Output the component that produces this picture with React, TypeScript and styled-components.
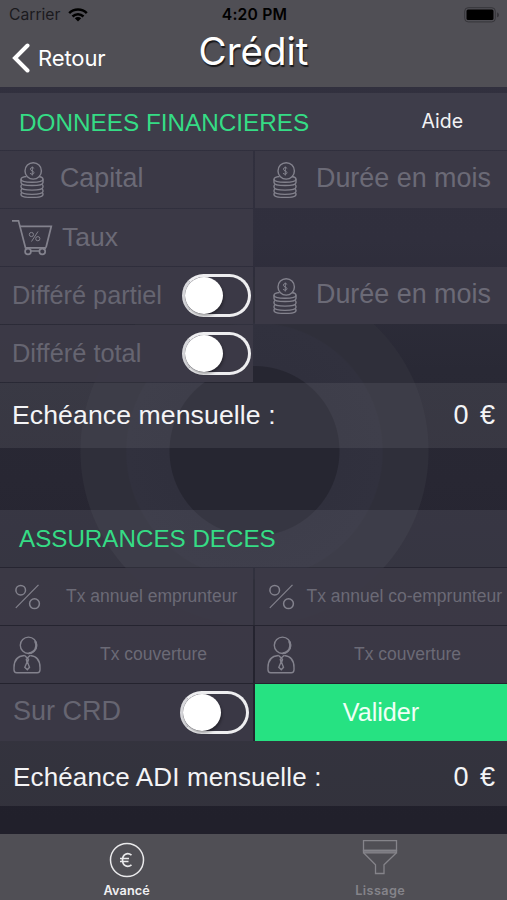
import { ReactNode } from 'react';
import styled, { createGlobalStyle } from 'styled-components';

type TextProps = {
  $size: number;
  $spacing?: number;
  $dx?: number;
};

type ToggleRowProps = {
  label: string;
  size: number;
  edge?: number;
  lift?: number;
};

type FieldProps = {
  icon: ReactNode;
  iconWidth: number;
  inset: number;
  label: string;
  size: number;
  center?: boolean;
  lift?: number;
};

const CoinsIcon = () => (
  <svg width="24" height="36" viewBox="0 0 24 36" fill="none" stroke="#83828d" strokeWidth="1.4">
    <circle cx="13.2" cy="8.9" r="8.2" />
    <path d="M14.2 6.5c-1-1.5-4-1.300-3.800.8.2 1.800 3.600 1.500 3.600 3.400 0 1.900-3 2-4 .5M12.300 4.500v9" strokeWidth="1" />
    <path d="M6.5 14.500C2.500 15 1 16 1 17.200c0 4.100 22 4.100 22 0 0-1.200-1.500-2.200-4-2.700" />
    <path d="M1 17.200v3.200c0 4.200 22 4.200 22 0v-3.200" />
    <path d="M2 22.500c-1.300.8-1 1.500-1 2.500 0 4.200 22 4.200 22 0 0-1 .3-1.700-1-2.500" />
    <path d="M2 27c-1.300.8-1 1.500-1 2.300 0 4.100 22 4.100 22 0 0-.8.3-1.500-1-2.300" />
    <path d="M2 30.500c-1.300.7-1 1.400-1 1.900 0 4 22 4 22 0 0-.5.3-1.200-1-1.900" />
  </svg>
);

const CartIcon = () => (
  <svg width="41" height="37" viewBox="0 0 41 37" fill="none" stroke="#83828d" strokeWidth="1.7">
    <path d="M0 1.800h6.500l7 27h20.500" />
    <path d="M8 7.300h31.300L34 28.500" />
    <path d="M13.500 28.800l1 2M34 28.500l-2.500 2.500M18 32h10" strokeWidth="1.300" />
    <circle cx="16" cy="32.500" r="2.900" />
    <circle cx="30.300" cy="32.500" r="2.900" />
    <path d="M26 12.500l-6.500 10" strokeWidth="1" />
    <circle cx="19.400" cy="15.500" r="2.100" strokeWidth="1" />
    <circle cx="25.800" cy="19.700" r="2.100" strokeWidth="1" />
  </svg>
);

const PercentIcon = () => (
  <svg width="26" height="26" viewBox="0 0 26 26" fill="none" stroke="#83828d" strokeWidth="1.5">
    <circle cx="5.700" cy="6.200" r="4.800" />
    <circle cx="19.500" cy="19.700" r="4.900" />
    <path d="M23.500.8L.8 23.800" strokeWidth="1.200" />
  </svg>
);

const PersonIcon = () => (
  <svg width="28" height="38" viewBox="0 0 28 38" fill="none" stroke="#83828d" strokeWidth="1.4">
    <circle cx="15.500" cy="9.300" r="8.200" />
    <path d="M22 5c2 4 1 8-1.500 10.200-1.500 1.500-3.500 2-5 2" strokeWidth="2" />
    <path d="M11.300 19.500C5 20 1 23.500 1 31.500v2.300c0 1.900 1 2.900 2.700 2.900h20.600c1.700 0 2.700-1 2.700-2.900v-2.300c0-8-4-11.500-9.700-12" />
    <path d="M11.300 19.300l3 2.700 3-2.700M14.300 22l-1 1.500.6 2.500M14.500 22l1 1.500-.8 2.500M14.300 25.500l-2.500 5.800 2.500 2.500 2.200-2.500z" />
  </svg>
);

const ToggleRow = ({ label, size, edge = 2, lift = 0 }: ToggleRowProps) => (
  <ToggleCell $edge={edge}>
    <ToggleLabel $size={size} $lift={lift}>
      {label}
    </ToggleLabel>
    <Switch>
      <Knob />
    </Switch>
  </ToggleCell>
);

const Field = ({ icon, iconWidth, inset, label, size, center, lift = 3 }: FieldProps) => (
  <Cell>
    <IconBox $inset={inset} $width={iconWidth}>
      {icon}
    </IconBox>
    <FieldText $center={center} $size={size} $lift={lift}>
      {label}
    </FieldText>
  </Cell>
);

export default function App() {
  return (
    <Screen>
      <GlobalStyle />
      <Header>
        <StatusBar>
          <Carrier>
            Carrier
            <svg width="20" height="14" viewBox="0 0 20 14" fill="none" stroke="#000" strokeWidth="2.500">
              <path d="M1.200 5.200C6 .3 14 .3 18.800 5.200" />
              <path d="M4.500 8.500c3.200-3.100 7.800-3.100 11 0" />
              <path d="M10 13.500L6.800 10.300c1.900-1.700 4.500-1.700 6.400 0z" fill="#000" stroke="none" />
            </svg>
          </Carrier>
          <Clock>4:20 PM</Clock>
          <BatteryBox>
            <svg width="36" height="16" viewBox="0 0 36 16" fill="none">
              <rect x=".7" y=".7" width="30.600" height="14.200" rx="3.500" stroke="#36353a" />
              <rect x="2.500" y="2.500" width="27" height="10.600" rx="1.500" fill="#000" />
              <path d="M33 5.500c2.700.5 2.700 4.300 0 4.800z" fill="#36353a" />
            </svg>
          </BatteryBox>
        </StatusBar>
        <NavBar>
          <BackButton>
            <svg width="18" height="30" viewBox="0 0 18 30" fill="none" stroke="#fff" strokeWidth="4">
              <path d="M15.500 2.500L3 15l12.500 12.500" strokeLinecap="round" />
            </svg>
            Retour
          </BackButton>
          <Title>Crédit</Title>
        </NavBar>
      </Header>

      <Section $solid>
        <SectionTitle $size={24.3} $dx={1}>
          DONNEES FINANCIERES
        </SectionTitle>
        <HelpButton>Aide</HelpButton>
      </Section>
      <Grid $bottom={1}>
        <Field icon={<CoinsIcon />} iconWidth={40} inset={20} label="Capital" size={26.8} />
        <Field icon={<CoinsIcon />} iconWidth={43} inset={18} label="Durée en mois" size={26.9} />
        <Field icon={<CartIcon />} iconWidth={50} inset={12} label="Taux" size={26.5} lift={1} />
        <span />
        <ToggleRow label="Différé partiel" size={25.3} />
        <Field icon={<CoinsIcon />} iconWidth={43} inset={18} label="Durée en mois" size={26.9} />
        <ToggleRow label="Différé total" size={25.4} />
      </Grid>
      <Total>
        <Amount $size={26.6} $spacing={0.1} $dx={2}>
          Echéance mensuelle :
        </Amount>
        <Amount $size={27}>0 €</Amount>
      </Total>

      <Spacer $height={62} />

      <Section>
        <SectionTitle $size={24.2}>ASSURANCES DECES</SectionTitle>
      </Section>
      <Grid $bottom={0}>
        <Field icon={<PercentIcon />} iconWidth={51} inset={15} label="Tx annuel emprunteur" size={17.5} lift={1} />
        <Field icon={<PercentIcon />} iconWidth={37.5} inset={14} label="Tx annuel co-emprunteur" size={17.5} lift={1} />
        <Field icon={<PersonIcon />} iconWidth={54} inset={13} label="Tx couverture" size={17.5} center lift={1} />
        <Field icon={<PersonIcon />} iconWidth={54} inset={12} label="Tx couverture" size={17.5} center lift={1} />
        <ToggleRow label="Sur CRD" size={27} edge={4} lift={3} />
        <SubmitButton>Valider</SubmitButton>
      </Grid>
      <Total $last>
        <Amount $size={26} $spacing={0.15} $dx={2}>
          Echéance ADI mensuelle :
        </Amount>
        <Amount $size={27}>0 €</Amount>
      </Total>

      <Spacer $height={28} />

      <TabBar>
        <Tab $active>
          <svg width="36" height="36" viewBox="0 0 36 36" fill="none" stroke="#e9e9eb" strokeWidth="1.5">
            <circle cx="18" cy="18" r="16.500" />
            <path d="M22.500 13.200c-4-3.200-9-1-9 4.800s5 8 9 4.800M11 16.500h9M11 19.500h8.500" strokeWidth="1.700" />
          </svg>
          Avancé
        </Tab>
        <Tab>
          <svg width="36" height="36" viewBox="0 0 36 36" fill="none" stroke="#85848a" strokeWidth="1.3">
            <path d="M1.500 1.700h33v9.800h-33z" />
            <path d="M1.500 11.500h33v2.300h-33z" fill="#77767c" />
            <path d="M1.800 14l11.700 11.800v8.700h8.500v-8.700L34.200 14" />
          </svg>
          Lissage
        </Tab>
      </TabBar>
    </Screen>
  );
}

const GlobalStyle = createGlobalStyle`
  * {
    box-sizing: border-box;
  }

  body {
    margin: 0;
    background: #22212d;
  }

  button {
    border: none;
    padding: 0;
    background: none;
    color: inherit;
    font: inherit;
  }

  svg {
    display: block;
    flex-shrink: 0;
  }
`;

const Screen = styled.main`
  display: flex;
  flex-direction: column;
  width: 507px;
  height: 900px;
  overflow: hidden;
  font-family: 'Liberation Sans', Arial, sans-serif;
  white-space: nowrap;
  background:
    radial-gradient(
      circle at 254.5px 451px,
      #262631 84.5px,
      #30303d 85.5px,
      #31313e 127.5px,
      #2f2f3a 129px,
      #2f2f3a 173.5px,
      transparent 174.5px
    ),
    linear-gradient(#32313f 0, #302f3d 240px, #292935 370px, #282733 480px, #21202b 820px);
`;

const Header = styled.header`
  height: 87px;
  flex-shrink: 0;
  margin-bottom: 6px;
  background: #504f55;
  font-family: Inter, sans-serif;
`;

const StatusBar = styled.div`
  display: grid;
  grid-template-columns: 1fr auto 1fr;
  align-items: center;
  height: 29px;
  padding: 0 7px 0 9px;
  color: #000;
`;

const Carrier = styled.div`
  display: flex;
  align-items: center;
  gap: 8px;
  color: #1b1a1e;
  font-size: 15.7px;
`;

const Clock = styled.div`
  font-size: 15.7px;
  font-weight: 600;
  letter-spacing: 0.2px;
`;

const BatteryBox = styled.div`
  justify-self: end;
`;

const NavBar = styled.div`
  display: grid;
  grid-template-columns: 1fr auto 1fr;
  color: #fff;
`;

const BackButton = styled.button`
  display: flex;
  align-items: center;
  gap: 8px;
  height: 58px;
  padding-left: 12px;
  font-size: 22px;
  letter-spacing: -0.1px;
`;

const Title = styled.h1`
  margin: 0;
  font-size: 38.5px;
  font-weight: 400;
  line-height: 45px;
  text-shadow: 1px 2px 1px #17171a;
`;

const Section = styled.section<{ $solid?: boolean }>`
  display: flex;
  align-items: center;
  justify-content: space-between;
  flex-shrink: 0;
  height: 57px;
  padding: ${({ $solid }) => ($solid ? '3px 44px 0 18px' : '1px 44px 0 19px')};
  background: ${({ $solid }) => ($solid ? '#3e3d4a' : 'rgba(110, 110, 122, 0.24)')};
`;

const SectionTitle = styled.h2<TextProps>`
  margin: 0;
  padding-left: ${({ $dx = 0 }) => $dx}px;
  color: #35dc85;
  font-size: ${({ $size }) => $size}px;
  font-weight: 400;
`;

const HelpButton = styled.button`
  padding-bottom: 4px;
  color: #f2f2f4;
  font-family: Inter, sans-serif;
  font-size: 19.5px;
`;

const Grid = styled.div<{ $bottom: number }>`
  display: grid;
  flex-shrink: 0;
  grid-template-columns: 253px 252px;
  grid-auto-rows: 57px;
  column-gap: 2px;
  row-gap: 1px;
  padding: 1px 0 ${({ $bottom }) => $bottom}px;
`;

const Cell = styled.div`
  display: flex;
  align-items: center;
  background: rgba(60, 58, 71, 0.95);
`;

const ToggleCell = styled(Cell)<{ $edge: number }>`
  justify-content: space-between;
  padding: 0 ${({ $edge }) => $edge}px 0 ${({ $edge }) => ($edge > 2 ? 13 : 12)}px;
`;

const IconBox = styled.div<{ $inset: number; $width: number }>`
  width: ${({ $inset, $width }) => $inset + $width}px;
  flex-shrink: 0;
  padding-left: ${({ $inset }) => $inset}px;
`;

const Placeholder = styled.span<TextProps & { $lift: number }>`
  padding-bottom: ${({ $lift }) => $lift}px;
  color: #6b6a76;
  font-size: ${({ $size }) => $size}px;
`;

const ToggleLabel = styled(Placeholder)`
  color: #666571;
`;

const FieldText = styled(Placeholder)<{ $center?: boolean }>`
  flex: 1;
  padding-right: ${({ $center }) => ($center ? 13 : 0)}px;
  text-align: ${({ $center }) => ($center ? 'center' : 'left')};
`;

const Switch = styled.div`
  width: 69px;
  height: 43px;
  border: 3px solid #eeeef0;
  border-left-color: #d8d8dc;
  border-radius: 22px;
`;

const Knob = styled.div`
  width: 38px;
  height: 37px;
  border-radius: 50%;
  background: #fff;
  box-shadow: 1px 2px 3px rgba(0, 0, 0, 0.35);
`;

const Total = styled.div<{ $last?: boolean }>`
  display: flex;
  align-items: center;
  justify-content: space-between;
  flex-shrink: 0;
  height: 65px;
  padding: ${({ $last }) => ($last ? '7px 12px 0 11px' : '0 12px 1px 10px')};
  background: rgba(110, 110, 118, 0.24);
`;

const Amount = styled.span<TextProps>`
  padding-left: ${({ $dx = 0 }) => $dx}px;
  color: #f4f4f6;
  font-size: ${({ $size }) => $size}px;
  letter-spacing: ${({ $spacing = 0 }) => $spacing}px;

  &:last-child {
    word-spacing: 4px;
  }
`;

const SubmitButton = styled.button`
  background: #26e282;
  color: #f0fff6;
  font-size: 25.2px;
`;

const Spacer = styled.div<{ $height: number }>`
  height: ${({ $height }) => $height}px;
  flex-shrink: 0;
`;

const TabBar = styled.nav`
  display: grid;
  grid-template-columns: 1fr 1fr;
  flex: 1;
  background: #504f55;
`;

const Tab = styled.button<{ $active?: boolean }>`
  display: flex;
  flex-direction: column;
  align-items: center;
  gap: ${({ $active }) => ($active ? 5 : 8)}px;
  padding-top: ${({ $active }) => ($active ? 8 : 5)}px;
  color: ${({ $active }) => ($active ? '#f0f0f2' : '#85848a')};
  font-family: Inter, sans-serif;
  font-size: 12.7px;
  font-weight: 600;
  letter-spacing: ${({ $active }) => ($active ? 0.1 : 0.4)}px;
`;
